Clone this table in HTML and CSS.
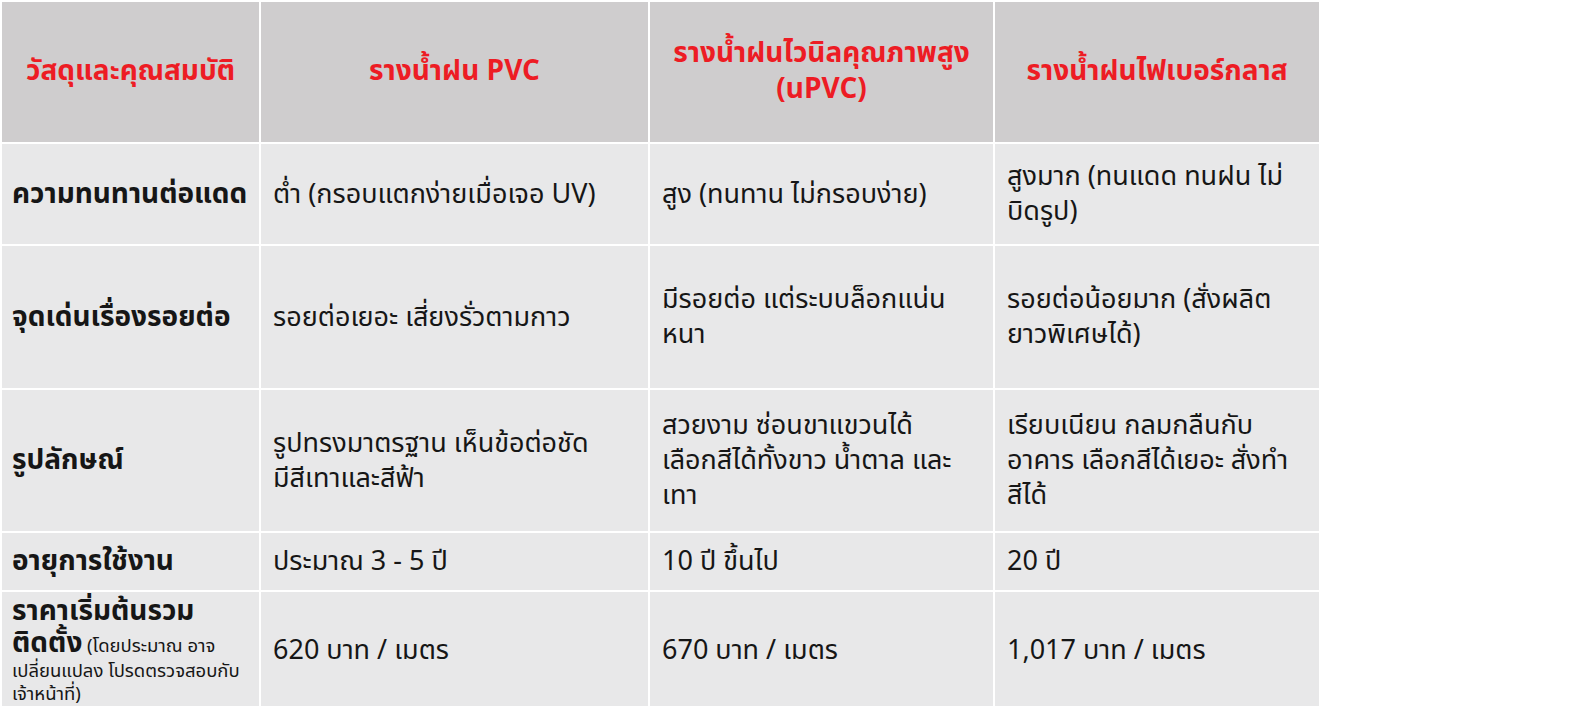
FILE: index.html
```html
<!DOCTYPE html>
<html lang="th">
<head>
<meta charset="utf-8">
<link rel="stylesheet" href="styles.css">
</head>
<body>
<table class="cmp">
  <colgroup>
    <col class="c1"><col class="c2"><col class="c3"><col class="c4">
  </colgroup>
  <thead>
    <tr class="r-head">
      <th>วัสดุและคุณสมบัติ</th>
      <th>รางน้ำฝน PVC</th>
      <th>รางน้ำฝนไวนิลคุณภาพสูง<br>(uPVC)</th>
      <th>รางน้ำฝนไฟเบอร์กลาส</th>
    </tr>
  </thead>
  <tbody>
    <tr class="r1">
      <td class="lab">ความทนทานต่อแดด</td>
      <td>ต่ำ (กรอบแตกง่ายเมื่อเจอ UV)</td>
      <td>สูง (ทนทาน ไม่กรอบง่าย)</td>
      <td>สูงมาก (ทนแดด ทนฝน ไม่<br>บิดรูป)</td>
    </tr>
    <tr class="r2">
      <td class="lab">จุดเด่นเรื่องรอยต่อ</td>
      <td>รอยต่อเยอะ เสี่ยงรั่วตามกาว</td>
      <td>มีรอยต่อ แต่ระบบล็อกแน่น<br>หนา</td>
      <td>รอยต่อน้อยมาก (สั่งผลิต<br>ยาวพิเศษได้)</td>
    </tr>
    <tr class="r3">
      <td class="lab">รูปลักษณ์</td>
      <td>รูปทรงมาตรฐาน เห็นข้อต่อชัด<br>มีสีเทาและสีฟ้า</td>
      <td>สวยงาม ซ่อนขาแขวนได้<br>เลือกสีได้ทั้งขาว น้ำตาล และ<br>เทา</td>
      <td>เรียบเนียน กลมกลืนกับ<br>อาคาร เลือกสีได้เยอะ สั่งทำ<br>สีได้</td>
    </tr>
    <tr class="r4">
      <td class="lab">อายุการใช้งาน</td>
      <td>ประมาณ 3 - 5 ปี</td>
      <td>10 ปี ขึ้นไป</td>
      <td>20 ปี</td>
    </tr>
    <tr class="r5">
      <td class="lab lab-price"><span class="big">ราคาเริ่มต้นรวม<br>ติดตั้ง</span> <span class="note">(โดยประมาณ อาจ<br>เปลี่ยนแปลง โปรดตรวจสอบกับ<br>เจ้าหน้าที่)</span></td>
      <td>620 บาท / เมตร</td>
      <td>670 บาท / เมตร</td>
      <td>1,017 บาท / เมตร</td>
    </tr>
  </tbody>
</table>
</body>
</html>
```
FILE: styles.css
```css
html, body {
  margin: 0;
  padding: 0;
  background: #ffffff;
}
body {
  font-family: "Noto Sans Thai", "Noto Sans", "DejaVu Sans", sans-serif;
  color: #161616;
}
.cmp {
  border-collapse: collapse;
  table-layout: fixed;
  width: 1319px;
}
.c1 { width: 259px; }
.c2 { width: 389px; }
.c3 { width: 345px; }
.c4 { width: 326px; }
.cmp th, .cmp td {
  border: 2px solid #ffffff;
  vertical-align: middle;
  padding: 0 12px;
  font-size: 27px;
  line-height: 35px;
  text-align: left;
  white-space: nowrap;
}
.cmp th {
  background: #cfcdce;
  color: #ed1c24;
  font-weight: 700;
  font-size: 28px;
  line-height: 36px;
  text-align: center;
}
.cmp td {
  background: #e8e8e9;
  font-weight: 400;
}
.cmp td.lab {
  font-weight: 700;
  font-size: 28px;
  padding-left: 10px;
  padding-right: 4px;
}
.r-head { height: 142px; }
.r1 { height: 102px; }
.r2 { height: 144px; }
.r3 { height: 143px; }
.r4 { height: 59px; }
.r5 { height: 118px; }
.cmp td.lab-price {
  font-size: 18px;
  line-height: 23px;
  padding-top: 2px;
}
.big {
  font-size: 28px;
  line-height: 32px;
  font-weight: 700;
}
.note {
  font-weight: 400;
  font-size: 18.5px;
  line-height: 23px;
}
```
